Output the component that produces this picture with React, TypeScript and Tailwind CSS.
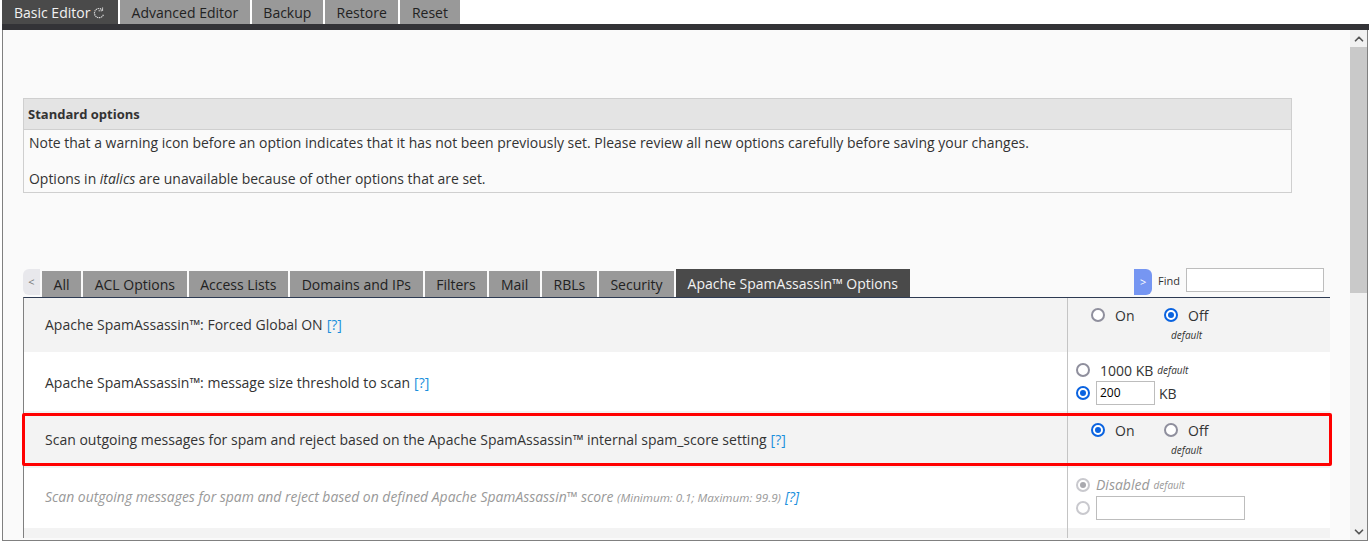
import { ChevronDown, ChevronUp } from 'lucide-react';
import type { ReactNode } from 'react';

const topTabs = ['Advanced Editor', 'Backup', 'Restore', 'Reset'];
const subTabs = ['All', 'ACL Options', 'Access Lists', 'Domains and IPs', 'Filters', 'Mail', 'RBLs', 'Security'];

function Radio({ checked = false, disabled = false }: { checked?: boolean; disabled?: boolean }) {
    let ring = 'border-[#8f8f9d] bg-white';
    if (checked) ring = 'border-[#0a63e0] bg-white';
    if (disabled) ring = 'border-[#c9c9ce] bg-white';
    return (
        <span className={`flex size-[14px] shrink-0 items-center justify-center rounded-full border-2 ${ring}`}>
            {checked && <span className={`size-[6px] rounded-full ${disabled ? 'bg-[#a9a9ae]' : 'bg-[#0a63e0]'}`} />}
        </span>
    );
}

function OnOff({ on, top }: { on: boolean; top: string }) {
    return (
        <div className={`pl-[23px] ${top}`}>
            <div className="flex h-[20px] items-center">
                <Radio checked={on} />
                <span className="ml-[10px] w-[49px]">On</span>
                <Radio checked={!on} />
                <span className="ml-[10px]">Off</span>
            </div>
            <div className="mt-[1px] pl-[80px] text-[10px] italic leading-[18px]">default</div>
        </div>
    );
}

function Row({ shaded, height, offset = '', left, right }: { shaded?: boolean; height: string; offset?: string; left: ReactNode; right: ReactNode }) {
    return (
        <div className={`flex ${height} ${shaded ? 'bg-[#f3f3f3]' : 'bg-white'}`}>
            <div className={`flex flex-1 items-center pl-[21px] ${offset}`}>
                <div>{left}</div>
            </div>
            <div className="w-[263px] shrink-0 border-l border-[#c4c4c4]">{right}</div>
        </div>
    );
}

function Help() {
    return <span className="ml-[4px] text-[#1a8fdc]">[?]</span>;
}

export default function App() {
    return (
        <div className="flex h-[542px] w-[1369px] flex-col overflow-hidden bg-white font-['Open_Sans',sans-serif] text-[14px] text-[#333]">
            {/* Onglets du haut */}
            <nav className="flex h-[24px] shrink-0 gap-[2px] pl-[2px]">
                <div className="flex w-[116px] items-center gap-[3px] bg-[#4a4a4a] pl-[12px] text-[#f2f2f2]">
                    Basic Editor
                    <svg viewBox="0 0 12 12" className="mt-[1px] size-[12px] text-[#ddd]" fill="none" stroke="currentColor" strokeWidth="1.2" strokeDasharray="1.3 0.7">
                        <path d="M9.6 3.2A4.6 4.6 0 1 0 10.4 7.6" />
                        <path d="M5.6 3.8L9.6 3.8L9.6 0.4" strokeWidth="1" />
                    </svg>
                </div>
                {topTabs.map((tab) => (
                    <div key={tab} className="flex items-center bg-[#999] px-[11.6px] text-[#222]">
                        {tab}
                    </div>
                ))}
            </nav>
            <div className="ml-[2px] h-[6px] shrink-0 bg-[#333337]" />

            <div className="relative mb-[1px] ml-[2px] mr-[1px] flex min-h-0 flex-1 border-x border-b border-[#808080] bg-[#fafafa]">
                <main className="min-w-0 flex-1 overflow-hidden pl-[20px] pt-[68px]">
                    <section className="w-[1269px] border border-[#cfcfcf]">
                        <h2 className="flex h-[31px] items-center border-b border-[#cfcfcf] bg-[#e4e4e4] pl-[4px] pt-[1px] text-[13px] font-bold">
                            Standard options
                        </h2>
                        <div className="px-[5px] pb-[4px] pt-[3px] text-[13.96px] leading-[19px]">
                            <p>Note that a warning icon before an option indicates that it has not been previously set. Please review all new options carefully before saving your changes.</p>
                            <p className="mt-[17px]">Options in <i>italics</i> are unavailable because of other options that are set.</p>
                        </div>
                    </section>

                    <div className="mt-[76px] flex h-[28px] w-[1301px] items-end">
                        <div className="mr-[2px] flex h-[26px] w-[17px] items-center justify-center self-start rounded-l-[6px] bg-[#e8e8ec] text-[11px] text-[#777]">&lt;</div>
                        <div className="flex h-[26px] gap-[2px]">
                            {subTabs.map((tab) => (
                                <div key={tab} className="flex items-center bg-[#999] px-[11.6px] text-[#222]">
                                    {tab}
                                </div>
                            ))}
                            <div className="-mt-[2px] flex h-[28px] items-center bg-[#4a4a4a] px-[11.5px] text-[#f2f2f2]">
                                Apache SpamAssassin™ Options
                            </div>
                        </div>
                        <div className="ml-auto flex h-[26px] items-start self-start">
                            <div className="flex h-[26px] w-[18px] items-center justify-center rounded-r-[6px] bg-[#7696f2] text-[11px] text-white">&gt;</div>
                            <span className="ml-[6px] mt-[4px] text-[11px]">Find</span>
                            <div className="-mt-[1px] ml-[6px] h-[24px] w-[138px] border border-[#bdbdbd] bg-white" />
                        </div>
                    </div>

                    <div className="relative w-[1307px] border-l border-t border-l-[#808080] border-t-[#2d3a52]">
                        <Row shaded height="h-[54px]" offset="pb-[2px]" left={<>Apache SpamAssassin™: Forced Global ON<Help /></>} right={<OnOff on={false} top="pt-[7px]" />} />
                        <Row
                            height="h-[59px]"
                            offset="pt-[2px]"
                            left={<>Apache SpamAssassin™: message size threshold to scan<Help /></>}
                            right={
                                <div className="pl-[8px] pt-[7px]">
                                    <div className="flex h-[22px] items-center">
                                        <Radio />
                                        <span className="ml-[10px]">1000 KB</span>
                                        <span className="ml-[4px] pt-[1px] text-[10px] italic">default</span>
                                    </div>
                                    <div className="flex h-[24px] items-center">
                                        <Radio checked />
                                        <span className="ml-[6px] flex h-[24px] w-[59px] items-center border border-[#bdbdbd] bg-white pl-[3px] text-[12px] font-medium text-black">200</span>
                                        <span className="ml-[4px]">KB</span>
                                    </div>
                                </div>
                            }
                        />
                        <Row shaded height="h-[57px]" left={<>Scan outgoing messages for spam and reject based on the Apache SpamAssassin™ internal spam_score setting<Help /></>} right={<OnOff on top="pt-[9px]" />} />
                        <Row
                            height="h-[60px]"
                            offset="pb-[2px]"
                            left={
                                <span className="text-[13.93px] italic text-[#999]">
                                    Scan outgoing messages for spam and reject based on defined Apache SpamAssassin™ score <span className="text-[11.67px]">(Minimum: 0.1; Maximum: 99.9)</span>
                                    <Help />
                                </span>
                            }
                            right={
                                <div className="pl-[8px] pt-[6px] text-[#999]">
                                    <div className="flex h-[22px] items-center">
                                        <Radio checked disabled />
                                        <span className="ml-[6px] pb-[2px] italic">Disabled</span>
                                        <span className="ml-[4px] text-[10px] italic">default</span>
                                    </div>
                                    <div className="flex h-[24px] items-center">
                                        <Radio disabled />
                                        <span className="ml-[6px] h-[24px] w-[149px] border border-[#bdbdbd] bg-white" />
                                    </div>
                                </div>
                            }
                        />
                        <Row shaded height="h-[10px]" left={null} right={null} />
                        {/* Encadré rouge de mise en avant */}
                        <div className="absolute left-[-2px] top-[115px] h-[53px] w-[1310px] rounded-[2px] border-[3px] border-[#ff0000]" />
                    </div>
                </main>

                <div className="flex w-[17px] shrink-0 flex-col bg-[#f1f1f1]">
                    <div className="flex h-[17px] items-center justify-center"><ChevronUp className="size-[14px] text-[#555]" strokeWidth={3} /></div>
                    <div className="h-[246px] bg-[#c9c9c9]" />
                    <div className="mt-auto flex h-[17px] items-center justify-center"><ChevronDown className="size-[14px] text-[#555]" strokeWidth={3} /></div>
                </div>
            </div>
        </div>
    );
}
